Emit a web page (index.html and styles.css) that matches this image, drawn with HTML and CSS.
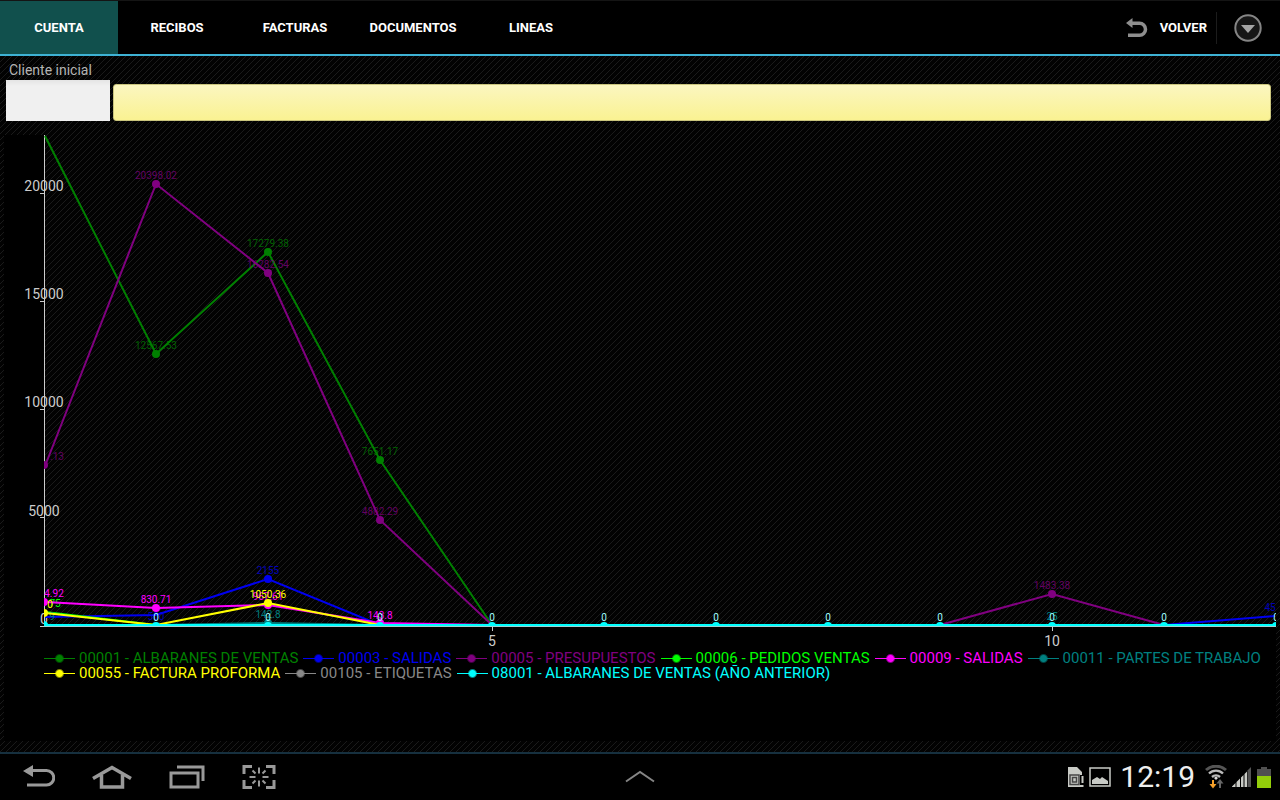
FILE: index.html
```html
<!DOCTYPE html>
<html lang="es">
<head>
<meta charset="utf-8">
<meta name="viewport" content="width=device-width, initial-scale=1">
<title>Cuenta</title>
<link rel="stylesheet" href="styles.css">
</head>
<body>
<header class="topbar">
  <nav class="tabs">
    <a class="tab tab-active" href="#cuenta">CUENTA</a>
    <a class="tab" href="#recibos">RECIBOS</a>
    <a class="tab" href="#facturas">FACTURAS</a>
    <a class="tab" href="#documentos">DOCUMENTOS</a>
    <a class="tab" href="#lineas">LINEAS</a>
  </nav>
  <div class="actions">
    <button class="back" type="button">
      <svg width="22" height="20" viewBox="0 0 22 20" aria-hidden="true"><path d="M0 5 6.500 0v3.500h7a7.500 7.500 0 0 1 0 15.500H2v-3.500h11.500a4 4 0 0 0 0-8.500h-7v3z" fill="#8e8e8e"/></svg>
      <span>VOLVER</span>
    </button>
    <button class="more" type="button" aria-label="Más opciones">
      <svg width="28" height="28" viewBox="0 0 28 28" aria-hidden="true"><circle cx="14" cy="14" r="12.700" fill="#161616" stroke="#858585" stroke-width="2"/><path d="M7 11h14l-7 8z" fill="#a5a5a5"/></svg>
    </button>
  </div>
</header>

<main class="content">
  <form class="client">
    <label class="client-label" for="code">Cliente inicial</label>
    <div class="fields">
      <input class="code" id="code" type="text">
      <input class="name" type="text" aria-label="Nombre del cliente" readonly>
    </div>
  </form>

  <section class="panel">
    <svg class="chart" viewBox="4 135 1272 514" role="img" aria-label="Importes por mes">
      <rect x="4" y="135" width="40" height="514" fill="#000"/>
      <rect x="44" y="626" width="1232" height="23" fill="#000"/>
      <g class="axis-line">
        <path d="M44.500 135V626M40 193.500h4M40 301.500h4M40 409.500h4M40 517.500h4M40 626.500H1276M492.500 627v4M1052.500 627v4"/>
      </g>
      <g class="axis-text">
        <text x="44" y="191">20000</text>
        <text x="44" y="299">15000</text>
        <text x="44" y="407">10000</text>
        <text x="44" y="516">5000</text>
        <text x="44" y="624">0</text>
        <text x="492" y="646">5</text>
        <text x="1052" y="646">10</text>
      </g>
      <g class="series green">
        <path d="M45 136 156 354 268 252 380 460 492 625"/>
        <circle cx="156" cy="354" r="4"/><circle cx="268" cy="252" r="4"/><circle cx="380" cy="460" r="4"/>
        <text x="156" y="349">12567.53</text><text x="268" y="247">17279.38</text><text x="380" y="455">7651.17</text>
      </g>
      <g class="series blue">
        <path d="M45 617 156 615 268 579 380 625H1164L1275 616"/>
        <circle cx="268" cy="579" r="4"/>
        <text x="268" y="574">2155</text><text x="156" y="620">500</text><text x="1270" y="611">45</text>
      </g>
      <g class="series purple">
        <path d="M45 466 156 184 268 273 380 520 492 625H940L1052 594 1164 625"/>
        <path d="M44 461a4 4 0 0 1 0 8z" class="dot"/>
        <circle cx="156" cy="184" r="4"/><circle cx="268" cy="273" r="4"/><circle cx="380" cy="520" r="4"/><circle cx="1052" cy="594" r="4"/>
        <text x="156" y="179">20398.02</text><text x="268" y="268">16282.54</text><text x="380" y="515">4882.29</text><text x="1052" y="589">1483.38</text><text x="57" y="460">.13</text>
      </g>
      <g class="series lime"><path d="M45 612 156 625"/><text x="55" y="607">75</text></g>
      <g class="series magenta">
        <path d="M45 602 156 608 268 605 380 623 492 625"/>
        <path d="M44 598a4 4 0 0 1 0 8z" class="dot"/>
        <circle cx="156" cy="608" r="4"/><circle cx="268" cy="605" r="4"/><circle cx="380" cy="623" r="4"/>
        <text x="54" y="597">4.92</text><text x="156" y="603">830.71</text><text x="268" y="600">967.61</text><text x="380" y="619">143.8</text>
      </g>
      <g class="series teal">
        <path d="M45 625H156L268 623 380 625H1275"/>
        <circle cx="268" cy="623" r="4"/>
        <text x="268" y="618">142.8</text><text x="1052" y="620">25</text><text x="52" y="620">9</text>
      </g>
      <g class="series yellow">
        <path d="M45 613 156 625 268 603 380 625"/>
        <path d="M44 609a4 4 0 0 1 0 8z" class="dot"/>
        <circle cx="268" cy="603" r="4"/>
        <text x="268" y="598">1050.36</text><text x="50" y="608">0</text>
      </g>
      <g class="series cyan">
        <path d="M45 625H1276"/>
        <path class="dot" d="M44 621a4 4 0 0 1 4 5h-4zM152 626a4 4 0 1 1 8 0zM264 626a4 4 0 1 1 8 0zM376 626a4 4 0 1 1 8 0zM488 626a4 4 0 1 1 8 0zM600 626a4 4 0 1 1 8 0zM712 626a4 4 0 1 1 8 0zM824 626a4 4 0 1 1 8 0zM936 626a4 4 0 1 1 8 0zM1048 626a4 4 0 1 1 8 0zM1160 626a4 4 0 1 1 8 0zM1272 626a4 4 0 0 1 4-4v4z"/>
      </g>
      <g class="series zero">
        <text x="156" y="621">0</text><text x="268" y="621">0</text><text x="380" y="621">0</text><text x="492" y="621">0</text><text x="604" y="621">0</text><text x="716" y="621">0</text><text x="828" y="621">0</text><text x="940" y="621">0</text><text x="1052" y="621">0</text><text x="1164" y="621">0</text><text x="1276" y="621">0</text>
      </g>
      <path d="M44 626.500H1276" stroke="#9fd0d0"/>
    </svg>
    <ul class="legend">
      <li class="key green"><i class="mark"></i>00001 - ALBARANES DE VENTAS</li>
      <li class="key blue"><i class="mark"></i>00003 - SALIDAS</li>
      <li class="key purple"><i class="mark"></i>00005 - PRESUPUESTOS</li>
      <li class="key lime"><i class="mark"></i>00006 - PEDIDOS VENTAS</li>
      <li class="key magenta"><i class="mark"></i>00009 - SALIDAS</li>
      <li class="key teal"><i class="mark"></i>00011 - PARTES DE TRABAJO</li>
      <li class="key yellow"><i class="mark"></i>00055 - FACTURA PROFORMA</li>
      <li class="key gray"><i class="mark"></i>00105 - ETIQUETAS</li>
      <li class="key cyan"><i class="mark"></i>08001 - ALBARANES DE VENTAS (AÑO ANTERIOR)</li>
    </ul>
  </section>
</main>

<footer class="sysbar">
  <div class="sys-left">
    <button type="button" aria-label="Atrás"><svg width="32" height="24" viewBox="0 0 32 24"><path d="M0 6 10 0v4h13.500a8.700 8.700 0 0 1 0 17.500H4v-3h19.500a5.700 5.700 0 0 0 0-11.500H10v5z" fill="#999"/></svg></button>
    <button type="button" aria-label="Inicio"><svg width="40" height="24" viewBox="0 0 40 24" fill="none" stroke="#999" stroke-width="3.500"><path d="M1 13.500 20 2.500 39 13.500M9.500 10v12h21V10"/></svg></button>
    <button type="button" aria-label="Recientes"><svg width="36" height="24" viewBox="0 0 36 24" fill="none" stroke="#999" stroke-width="3"><path d="M2 8h27v14H2zM8 2h26v14"/></svg></button>
    <button type="button" aria-label="Captura"><svg width="34" height="24" viewBox="0 0 34 24" fill="none" stroke="#999"><path d="M10 1.500H2V9M24 1.500h8V9M2 15v7.500h8M32 15v7.500h-8" stroke-width="3"/><path d="M17 2.500v6M17 15.500v6M7.500 12h6M20.500 12h6M10.500 5.500l3 3M23.500 5.500l-3 3M10.500 18.500l3-3M23.500 18.500l-3-3" stroke-width="2"/></svg></button>
  </div>
  <button class="sys-up" type="button" aria-label="Mostrar bandeja"><svg width="30" height="14" viewBox="0 0 30 14" fill="none" stroke="#858585" stroke-width="2"><path d="M1 11.500 15 2l14 9.500"/></svg></button>
  <div class="status">
    <svg width="17" height="21" viewBox="0 0 17 21"><path d="M1 0h9l5 5v3h-2v10h2v2H1z" fill="#c9cbc6"/><path d="M3 8h9v9.500H3zM5.500 10.500h4v4.500h-4z" fill="none" stroke="#454545" stroke-width="1.500"/><path d="M14.500 9h2v7h-2zM14.500 18h2v2h-2z" fill="#c9cbc6"/></svg>
    <svg width="22" height="20" viewBox="0 0 22 20"><path d="M1 1h20v18H1z" fill="none" stroke="#c9cbc6" stroke-width="1.500"/><path d="M3 17v-4l5-3 3 2 2-2 6 4v3z" fill="#c9cbc6"/></svg>
    <span class="clock">12:19</span>
    <svg width="22" height="24" viewBox="0 0 22 24" fill="none"><path d="M1 5a15 15 0 0 1 20 0" stroke="#555" stroke-width="3"/><path d="M4 8.500a10 10 0 0 1 14 0M7 12a6 6 0 0 1 8 0" stroke="#bbb" stroke-width="2.400"/><path d="M11 11.500l2 1.500-2 2-2-2z" fill="#ddd"/><path d="M8 15v5" stroke="#f6a02a" stroke-width="2"/><path d="M4.500 19h7L8 23.500z" fill="#f6a02a"/><path d="M15 23v-5" stroke="#666" stroke-width="2"/><path d="M11.500 18.500h7L15 14z" fill="#666"/></svg>
    <svg width="20" height="20" viewBox="0 0 20 20"><path d="M15.500 3.500 19 0v20h-3.500z" fill="#555"/><path d="M0 19.500 3.500 16v4H0zM4.500 15l3.500-3.500V20H4.500zM9 10.500l2.500-2.500v12H9zM12.500 7 15 4.500V20h-2.500z" fill="#c9cbc6"/></svg>
    <svg width="14" height="21" viewBox="0 0 14 21"><path d="M4 0h6v2h4v7H0V2h4z" fill="#505050"/><path d="M0 9h14v12H0z" fill="#93ce0a"/></svg>
  </div>
</footer>
</body>
</html>
```
FILE: styles.css
```css
* { box-sizing: border-box; }

body {
  margin: 0;
  min-height: 100vh;
  display: flex;
  flex-direction: column;
  background: #000;
  color: #fff;
  font-family: Roboto, "Noto Sans", sans-serif;
}

button {
  padding: 0;
  border: 0;
  background: none;
  color: inherit;
  font: inherit;
}

svg { display: block; }

.topbar {
  display: flex;
  justify-content: space-between;
  height: 56px;
  border-top: 1px solid #141414;
  border-bottom: 2px solid #3eb2d4;
  font-size: 13px;
  font-weight: 700;
}

.tabs { display: flex; }

.tab {
  width: 118px;
  display: flex;
  align-items: center;
  justify-content: center;
  color: #fff;
  text-decoration: none;
}

.tab-active { background: #11504d; }

.actions {
  display: flex;
  align-items: center;
  padding-right: 18px;
}

.back {
  display: flex;
  align-items: center;
  gap: 12px;
  height: 32px;
  padding-right: 9px;
  border-right: 1px solid #1c1c1c;
}

.more { margin-left: 17px; }

.content {
  flex: 1;
  padding: 5px 4px 11px;
  background: linear-gradient(135deg, #020202 42%, #1a1a1a 42% 58%, #020202 58%) 0 0 / 6px 6px;
}

.client { padding: 0 5px 14px 2px; }

.client-label {
  display: block;
  padding: 0 0 1px 3px;
  color: #b4b4b4;
  font-size: 14px;
  line-height: 18px;
}

.fields {
  display: flex;
  align-items: flex-end;
  gap: 3px;
}

.code {
  width: 104px;
  height: 41px;
  border: 0;
  background: linear-gradient(#e4e4e4, #f0f0f0 6px);
}

.name {
  flex: 1;
  height: 37px;
  border: 1px solid #c9c47c;
  border-radius: 3px;
  background: linear-gradient(#fbf6c0, #faf292);
}

.chart { width: 100%; }

.axis-line {
  fill: none;
  stroke: #ccc;
}

.axis-text {
  fill: #ccc;
  font-size: 14px;
  text-anchor: middle;
}

.series path {
  fill: none;
  stroke: currentColor;
  stroke-width: 2;
}

.series circle,
.series .dot {
  fill: currentColor;
  stroke: none;
}

.series text {
  fill: currentColor;
  font-size: 10px;
  text-anchor: middle;
}

.series.green text,
.series.blue text,
.series.purple text { opacity: 0.75; }

.green { color: #008000; }
.blue { color: #0000f0; }
.purple { color: #800080; }
.lime { color: #00ff00; }
.magenta { color: #ff00ff; }
.teal { color: #008080; }
.yellow { color: #ffff00; }
.gray { color: #888; }
.cyan { color: #00ffff; }
.zero { color: #a0ffff; }

.legend {
  display: flex;
  flex-wrap: wrap;
  gap: 0 5px;
  min-height: 92px;
  align-content: flex-start;
  margin: 0;
  padding: 2px 0 0 40px;
  background: #000;
  list-style: none;
  font-size: 15px;
  line-height: 15px;
}

.key {
  display: flex;
  align-items: center;
  gap: 4px;
  white-space: nowrap;
}

.mark {
  width: 31px;
  height: 9px;
  background:
    radial-gradient(circle, currentColor 3px, transparent 5px),
    linear-gradient(currentColor, currentColor) center / 100% 1px no-repeat;
}

.sysbar {
  display: grid;
  grid-template-columns: 1fr auto 1fr;
  align-items: center;
  height: 48px;
  padding: 0 9px;
  border-top: 2px solid #16303f;
}

.sys-left {
  display: flex;
  gap: 37px;
  padding-left: 14px;
}

.status {
  display: flex;
  align-items: center;
  justify-content: flex-end;
  gap: 5px;
}

.clock {
  margin: 0 5px 0 4px;
  color: #eee;
  font-size: 30px;
  line-height: 30px;
}
```
